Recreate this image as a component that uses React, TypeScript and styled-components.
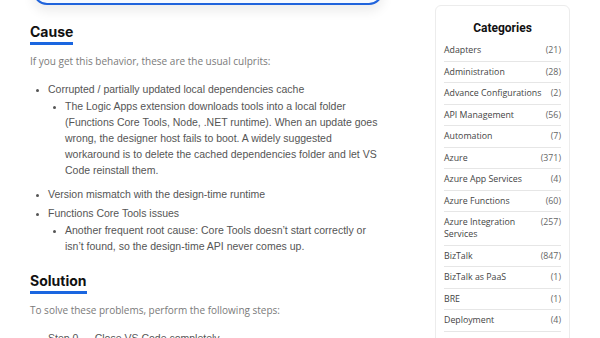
import React from "react";
import styled, { createGlobalStyle } from "styled-components";

const GlobalStyle = createGlobalStyle`
  html, body {
    margin: 0;
    padding: 0;
    background: #ffffff;
    overflow: hidden;
  }
`;

const categories: { name: string; count: number }[] = [
  { name: "Adapters", count: 21 },
  { name: "Administration", count: 28 },
  { name: "Advance Configurations", count: 2 },
  { name: "API Management", count: 56 },
  { name: "Automation", count: 7 },
  { name: "Azure", count: 371 },
  { name: "Azure App Services", count: 4 },
  { name: "Azure Functions", count: 60 },
  { name: "Azure Integration Services", count: 257 },
  { name: "BizTalk", count: 847 },
  { name: "BizTalk as PaaS", count: 1 },
  { name: "BRE", count: 1 },
  { name: "Deployment", count: 4 },
  { name: "DevOps", count: 12 },
];

const App = () => {
  return (
    <>
      <GlobalStyle />
      <S.Page>
        <S.Main>
          <S.Callout />
          <S.Heading>Cause</S.Heading>
          <S.Lead>If you get this behavior, these are the usual culprits:</S.Lead>
          <S.List>
            <S.Item>
              Corrupted / partially updated local dependencies cache
              <S.SubList>
                <S.Item>
                  The Logic Apps extension downloads tools into a local folder
                  (Functions Core Tools, Node, .NET runtime). When an update goes
                  wrong, the designer host fails to boot. A widely suggested
                  workaround is to delete the cached dependencies folder and let VS
                  Code reinstall them.
                </S.Item>
              </S.SubList>
            </S.Item>
            <S.Item>Version mismatch with the design-time runtime</S.Item>
            <S.Item>
              Functions Core Tools issues
              <S.SubList>
                <S.Item>
                  Another frequent root cause: Core Tools doesn’t start correctly or
                  isn’t found, so the design-time API never comes up.
                </S.Item>
              </S.SubList>
            </S.Item>
          </S.List>
          <S.Heading $gap={18}>Solution</S.Heading>
          <S.Lead>To solve these problems, perform the following steps:</S.Lead>
          <S.List>
            <S.Item>Step 0 — Close VS Code completely</S.Item>
          </S.List>
        </S.Main>
        <S.Sidebar>
          <S.Card>
            <S.CardTitle>Categories</S.CardTitle>
            {categories.map((c) => (
              <S.Row key={c.name}>
                <S.RowName>{c.name}</S.RowName>
                <S.RowCount>({c.count})</S.RowCount>
              </S.Row>
            ))}
          </S.Card>
        </S.Sidebar>
      </S.Page>
    </>
  );
};

export default App;

const S = {
  Page: styled.div`
    display: flex;
    align-items: flex-start;
    width: 600px;
    height: 338px;
    overflow: hidden;
    padding-left: 30px;
    box-sizing: border-box;
  `,
  Main: styled.div`
    width: 356px;
    flex-shrink: 0;
  `,
  Callout: styled.div`
    margin: -40px 3px 0 3px;
    height: 43px;
    border: 2px solid #1f63dc;
    border-top: none;
    border-radius: 0 0 14px 14px;
    background: #f5f9ff;
    box-shadow: 0 6px 12px rgba(0, 0, 0, 0.08);
  `,
  Heading: styled.h2<{ $gap?: number }>`
    display: block;
    width: fit-content;
    margin: ${(p) => p.$gap ?? 18}px 0 0 0;
    padding-bottom: 1px;
    border-bottom: 3px solid #1a66e0;
    font-family: Inter, Roboto, "Liberation Sans", sans-serif;
    font-size: 14px;
    font-weight: 700;
    line-height: 18px;
    color: #111111;
  `,
  Lead: styled.p`
    margin: 8px 0 0 0;
    font-family: "Open Sans", "Noto Sans", sans-serif;
    font-size: 10px;
    line-height: 16px;
    font-weight: 400;
    color: #7a7a7a;
  `,
  List: styled.ul`
    margin: 12px 0 0 0;
    padding: 0 0 0 18px;
    font-family: "Liberation Sans", Arial, sans-serif;
    font-size: 10.5px;
    line-height: 16px;
    color: #555555;
    list-style: disc;
  `,
  SubList: styled.ul`
    margin: 1px 0 8px 0;
    padding: 0 0 0 17px;
    list-style: disc;
  `,
  Item: styled.li`
    margin-bottom: 3px;
    &::marker {
      font-size: 9px;
    }
  `,
  Sidebar: styled.aside`
    margin-left: 49px;
    width: 135px;
    flex-shrink: 0;
    padding-top: 5px;
  `,
  Card: styled.div`
    border: 1px solid #ececec;
    border-radius: 6px;
    padding: 12px 8px 0 8px;
    background: #ffffff;
  `,
  CardTitle: styled.h3`
    margin: 0 0 2px 0;
    text-align: center;
    font-family: Roboto, "Liberation Sans", sans-serif;
    font-size: 12px;
    font-weight: 700;
    line-height: 20px;
    color: #111111;
  `,
  Row: styled.div`
    display: flex;
    justify-content: space-between;
    align-items: flex-start;
    gap: 6px;
    padding: 4.25px 0;
    border-bottom: 1px solid #e6e6e6;
    font-family: "Open Sans", "Noto Sans", sans-serif;
    font-size: 8.8px;
    line-height: 12px;
    color: #444444;
  `,
  RowName: styled.span``,
  RowCount: styled.span`
    color: #666666;
    white-space: nowrap;
  `,
};
